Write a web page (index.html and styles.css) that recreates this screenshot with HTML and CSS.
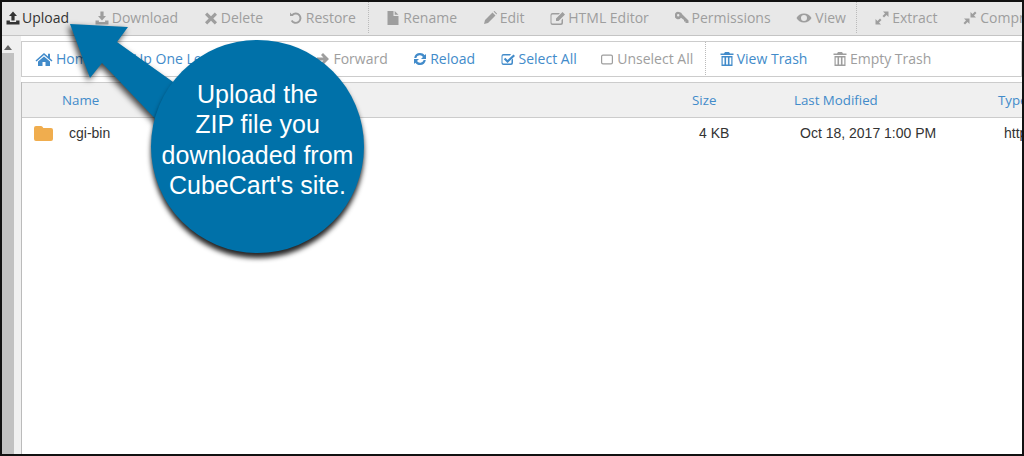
FILE: index.html
```html
<!DOCTYPE html>
<html lang="en">
<head>
<meta charset="utf-8">
<title>File Manager</title>
<link rel="stylesheet" href="styles.css">
</head>
<body>
<div class="frame">
  <div class="toolbar">
    <span class="tool active"><svg class="ic" viewBox="0 0 14 14"><path d="M7 .5 11 5H8.600v4.500H5.400V5H3ZM.5 9.500h3.400v1.600h6.200V9.500h3.400V13.500H.5Z"/></svg>Upload</span>
    <span class="tool"><svg class="ic" viewBox="0 0 14 14"><path d="M5.400.5h3.200V5H11L7 9.500 3 5h2.400ZM.5 9.500h3.400v1.600h6.200V9.500h3.400v4H.5Z"/></svg>Download</span>
    <span class="tool"><svg class="ic" viewBox="0 0 14 14"><path d="M3.200 1.500 7 5.200l3.800-3.700 2.200 2.200L9.300 7.500l3.700 3.800-2.200 2.200L7 9.800l-3.800 3.700L1 11.300l3.700-3.800L1 3.700Z"/></svg>Delete</span>
    <span class="tool"><svg class="ic" viewBox="0 0 14 14"><path d="M1 1.500 4.500 5H1ZM2.600 3.200A5.700 5.700 0 1 1 1.800 10l1.700-1a3.700 3.700 0 1 0 .6-4.400Z"/></svg>Restore</span>
    <span class="sep"></span>
    <span class="tool"><svg class="ic" viewBox="0 0 14 14"><path d="M1.500 0H7.500V5h5v9h-11ZM8.700 0l3.800 3.800H8.700Z"/></svg>Rename</span>
    <span class="tool"><svg class="ic" viewBox="0 0 14 14"><path d="M9.500 1.500 12.500 4.500 5 12 1 13l1-4ZM10.500.5l1-.5 2.500 2.500-.5 1Z"/></svg>Edit</span>
    <span class="tool"><svg class="ic ic-wide" viewBox="0 0 16 14"><path d="M2.500 2H10L8.500 3.500H2.500q-1 0-1 1v7q0 1 1 1h8q1 0 1-1V9L13 7.500v4.500q0 2-2 2H2.500q-2 0-2-2V4q0-2 2-2ZM12.500 1 15 3.500 8.500 10H6V7.500Z"/></svg>HTML Editor</span>
    <span class="tool"><svg class="ic" viewBox="0 0 14 14"><path fill-rule="evenodd" d="M4 1a3.600 3.600 0 0 1 3.400 2.600L13.500 9.500V12h-3v-1.500H9V9L6 6.700A3.600 3.600 0 1 1 4 1Zm-.8 2a1.200 1.200 0 1 0 0 2.400 1.200 1.200 0 0 0 0-2.400Z"/></svg>Permissions</span>
    <span class="tool"><svg class="ic ic-eye" viewBox="0 0 16 14"><path fill-rule="evenodd" d="M8 2.500c3.400 0 6.200 2 7.500 4.500-1.300 2.500-4.100 4.500-7.500 4.500S1.800 9.500.5 7C1.800 4.500 4.600 2.500 8 2.500Zm0 1.500a3 3 0 1 0 0 6 3 3 0 0 0 0-6Z"/></svg>View</span>
    <span class="sep sep-last"></span>
    <span class="tool"><svg class="ic" viewBox="0 0 14 14"><path d="M8 .5h5.500V6l-2-2L9 6.500 7.500 5 10 2.500ZM6 13.500H.5V8l2 2L5 7.500 6.500 9 4 11.500Z"/></svg>Extract</span>
    <span class="tool"><svg class="ic" viewBox="0 0 14 14"><path d="M13.500 2 11 4.500l2 2H7.500V1l2 2L12 .5ZM.5 12 3 9.500l-2-2h5.500V13l-2-2L2 13.500Z"/></svg>Compress</span>
  </div>
  <div class="body">
    <div class="scrollbar">
      <span class="scroll-up"></span>
      <span class="scroll-thumb"></span>
    </div>
    <div class="content">
      <div class="navbar">
        <span class="nav link first"><svg class="ic ic-home" viewBox="0 0 17 14"><path d="M8.500 1 12.500 4.500V1.800h2v4.400L17 8.500l-1 1L8.500 3 1 9.500l-1-1ZM8.500 4.500 14.500 9.500V14H10V10H7v4H2.500V9.500Z"/></svg>Home</span>
        <span class="nav link"><svg class="ic" viewBox="0 0 14 14"><path d="M7 1 13 7l-2 2-2.500-2.500V13h-3V6.500L3 9 1 7Z"/></svg>Up One Level</span>
        <span class="nav back"><svg class="ic" viewBox="0 0 14 14"><path d="M7 1l6 6-6 6-2-2 2.500-2.500H1v-3h6.500L5 3Z"/></svg>Back</span>
        <span class="nav"><svg class="ic" viewBox="0 0 14 14"><path d="M7 1l6 6-6 6-2-2 2.500-2.500H1v-3h6.500L5 3Z"/></svg>Forward</span>
        <span class="nav link"><svg class="ic" viewBox="0 0 14 14"><path d="M7 1c2 0 3.600.9 4.600 2.300L13 2v5H8l2-2A3.700 3.700 0 0 0 3.300 6H1.200A6 6 0 0 1 7 1ZM1 12V7h5L4 9a3.700 3.700 0 0 0 6.700-1h2.100A6 6 0 0 1 7 13c-2 0-3.600-.9-4.600-2.300Z"/></svg>Reload</span>
        <span class="nav link select"><svg class="ic" viewBox="0 0 14 14"><path d="M2.500 2H10L9 3.500H2.500q-1 0-1 1v6q0 1 1 1h7q1 0 1-1V8L12 6.500V11q0 2-2 2H2.500q-2 0-2-2V4q0-2 2-2ZM12.500 2.500 14 4 6.500 11 2.800 7.300l1.500-1.500 2.200 2.200Z"/></svg>Select All</span>
        <span class="nav"><svg class="ic" viewBox="0 0 14 14"><path fill-rule="evenodd" d="M3 2.500h8q2 0 2 2v6q0 2-2 2H3q-2 0-2-2v-6q0-2 2-2Zm0 1.200q-.8 0-.8.8v6q0 .8.8.800h8q.8 0 .8-.8v-6q0-.8-.8-.8Z"/></svg>Unselect All</span>
        <span class="sep nav-sep"></span>
        <span class="nav link"><svg class="ic" viewBox="0 0 14 14"><path d="M5 0h4l1 1.500h3.500V3H.5V1.500H4ZM1.500 4h11v10h-11Zm1.200 1.500V12.500h1.800V5.500Zm3.400 0V12.500h1.800V5.500Zm3.400 0V12.500h1.800V5.500Z" fill-rule="evenodd"/></svg>View Trash</span>
        <span class="nav"><svg class="ic" viewBox="0 0 14 14"><path d="M5 0h4l1 1.500h3.500V3H.5V1.500H4ZM1.500 4h11v10h-11Zm1.200 1.500V12.500h1.800V5.500Zm3.400 0V12.500h1.800V5.500Zm3.400 0V12.500h1.800V5.500Z" fill-rule="evenodd"/></svg>Empty Trash</span>
      </div>
      <div class="table">
        <div class="thead">
          <span>Name</span>
          <span>Size</span>
          <span>Last Modified</span>
          <span>Type</span>
        </div>
        <div class="trow">
          <span class="cell-name"><svg class="folder" viewBox="0 0 19 15"><path d="M2 0h5q1.500 0 2 1.500l.3.500H17q2 0 2 2v9q0 2-2 2H2q-2 0-2-2V2q0-2 2-2Z"/></svg>cgi-bin</span>
          <span class="cell-size">4 KB</span>
          <span class="cell-date">Oct 18, 2017 1:00 PM</span>
          <span class="cell-type">httpd/unix-directory</span>
        </div>
      </div>
    </div>
  </div>
  <svg class="arrow" viewBox="0 0 200 120" aria-hidden="true"><polygon points="0,0 58,3 47,18 120,70 95,105 32,39 20,54"/></svg>
  <div class="bubble">Upload the<br>ZIP file you<br>downloaded from<br>CubeCart's site.</div>
</div>
</body>
</html>
```
FILE: styles.css
```css
* { box-sizing: border-box; }
html, body { margin: 0; height: 100%; background: #fff; }
.frame {
  position: relative;
  width: 1024px;
  height: 456px;
  border: 2px solid #111;
  overflow: hidden;
  display: flex;
  flex-direction: column;
  font-family: "Open Sans", sans-serif;
  font-size: 14px;
}
.toolbar {
  flex: none;
  height: 34px;
  display: flex;
  align-items: center;
  gap: 25.700px;
  padding: 0 0 2px 4px;
  background: #e8e8e8;
  border-bottom: 1px solid #c4c4c4;
  white-space: nowrap;
  color: #9e9e9e;
}
.tool, .nav { display: inline-flex; align-items: center; flex: none; }
.tool.active { color: #333; }
.ic { width: 14px; height: 14px; margin-right: 3px; fill: currentColor; flex: none; }
.active .ic { margin-right: 2px; }
.ic-wide { width: 16px; margin-right: 2px; }
.ic-eye { width: 16px; }
.ic-home { width: 18px; }
.sep { flex: none; align-self: stretch; width: 0; border-left: 1px dotted #bbb; margin: 0 -8px 0 -14px; }
.sep-last { margin: 0 -7px 0 -16px; }
.body { flex: 1; min-height: 0; display: flex; }
.scrollbar {
  flex: none;
  width: 19px;
  background: #f0f0f0;
  display: flex;
  flex-direction: column;
  padding-top: 9px;
}
.scroll-up {
  flex: none;
  width: 0;
  height: 0;
  margin-left: 2px;
  border: 4px solid transparent;
  border-top: 0;
  border-bottom: 5px solid #666;
}
.scroll-thumb { flex: 1; width: 12px; margin-top: 3px; background: #c1c1c1; }
.content { flex: 1; min-width: 0; padding-top: 5px; display: flex; flex-direction: column; gap: 5px; background: #fff; }
.navbar {
  flex: none;
  height: 36px;
  display: flex;
  align-items: center;
  gap: 25.500px;
  padding: 0 0 1px 13px;
  border: 1px solid #ccc;
  white-space: nowrap;
  color: #9e9e9e;
  overflow: hidden;
}
.first { margin-right: -5px; }
.back { margin-right: -2.500px; }
.select { margin-right: -2px; }
.select .ic { margin-right: 4px; }
.link { color: #428bca; }
.nav-sep { margin: 0 -11.500px 0 -14px; }
.table { flex: 1; min-height: 0; border-left: 1px solid #bbb; display: flex; flex-direction: column; }
.thead, .trow { display: grid; white-space: nowrap; }
.thead {
  flex: none;
  height: 36px;
  align-items: center;
  grid-template-columns: 630px 102px 204px 1fr;
  padding-left: 40px;
  background: #f0f0f0;
  border-top: 1px solid #ccc;
  border-bottom: 1px solid #ccc;
  color: #428bca;
  font-size: 13.300px;
}
.trow {
  height: 30px;
  align-items: center;
  padding-left: 12px;
  grid-template-columns: 665px 101px 204px 1fr;
  font-family: "Liberation Sans", Arial, sans-serif;
  font-size: 14px;
  color: #333;
}
.cell-name { display: flex; align-items: center; gap: 16px; }
.folder { width: 19px; height: 15px; fill: #f0ad4e; }
.arrow {
  position: absolute;
  left: 68px;
  top: 22px;
  width: 200px;
  height: 120px;
  fill: #0071a9;
  filter: drop-shadow(-2px 3px 3px rgba(0, 0, 0, .75));
}
.bubble {
  position: absolute;
  left: 149px;
  top: 38px;
  width: 213px;
  height: 213px;
  border-radius: 50%;
  background: #0071a9;
  box-shadow: 0 5px 5px rgba(0, 0, 0, .85);
  color: #fff;
  font-family: "Liberation Sans", Arial, sans-serif;
  font-size: 25px;
  line-height: 30.400px;
  text-align: center;
  padding-top: 39px;
}
```
